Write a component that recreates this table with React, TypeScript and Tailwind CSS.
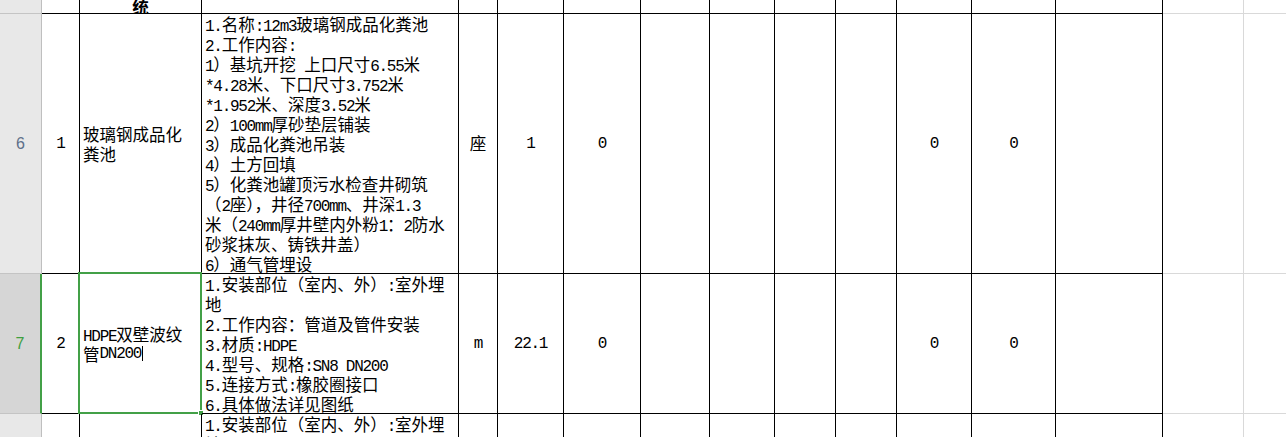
import type { ReactNode } from "react";

const colW = [
  "w-[38px]",
  "w-[122px]",
  "w-[257px]",
  "w-[39px]",
  "w-[66px]",
  "w-[77px]",
  "w-[69px]",
  "w-[65px]",
  "w-[61px]",
  "w-[61px]",
  "w-[75px]",
  "w-[84px]",
  "w-[107px]",
  "w-[81px]",
];

const row6Desc = [
  "1.名称:12m3玻璃钢成品化粪池",
  "2.工作内容:",
  "1）基坑开挖 上口尺寸6.55米",
  "*4.28米、下口尺寸3.752米",
  "*1.952米、深度3.52米",
  "2）100mm厚砂垫层铺装",
  "3）成品化粪池吊装",
  "4）土方回填",
  "5）化粪池罐顶污水检查井砌筑",
  "（2座），井径700mm、井深1.3",
  "米（240mm厚井壁内外粉1：2防水",
  "砂浆抹灰、铸铁井盖）",
  "6）通气管埋设",
];

const row7Desc = [
  "1.安装部位（室内、外）:室外埋",
  "地",
  "2.工作内容：管道及管件安装",
  "3.材质:HDPE",
  "4.型号、规格:SN8 DN200",
  "5.连接方式:橡胶圈接口",
  "6.具体做法详见图纸",
];

// ascii runs get a half-width mono face, like the sheet's song-style font
function T({ s }: { s: string }) {
  const parts = s.match(/[\x20-\x7e]+|[^\x20-\x7e]+/g) || [];
  return (
    <>
      {parts.map((p, i) =>
        /^[\x20-\x7e]+$/.test(p) ? (
          <span
            key={i}
            className="font-['Liberation_Mono',monospace] text-[16px] tracking-[-1.27px] whitespace-pre"
          >
            {p}
          </span>
        ) : (
          <span key={i}>{p}</span>
        ),
      )}
    </>
  );
}

type RowData = {
  num: string;
  selected?: boolean;
  height: string;
  cells: Record<number, ReactNode>;
};

function Lines({ lines }: { lines: string[] }) {
  return (
    <div className="flex flex-col">
      {lines.map((l, i) => (
        <div key={i} className="h-[20px] leading-[20px] whitespace-nowrap">
          <T s={l} />
        </div>
      ))}
    </div>
  );
}

function Cell({ i, children, className = "" }: { i: number; children?: ReactNode; className?: string }) {
  const border =
    i < 13
      ? "border-r border-b border-black"
      : i === 13
        ? "border-r border-b border-[#d9d9d9]"
        : "border-b border-[#d9d9d9]";
  const width = i < 14 ? colW[i] : "flex-1";
  return <div className={`relative shrink-0 ${width} ${border} ${className}`}>{children}</div>;
}

function cellAlign(i: number) {
  if (i === 2) return "pl-[3px] overflow-hidden";
  if (i === 1) return "pl-[3px] flex items-center";
  return "flex items-center justify-center";
}

function Row({ row }: { row: RowData }) {
  const hdr = row.selected
    ? "bg-[#d6d6d6] text-[#3f9f3f] border-r-2 border-r-[#43a047]"
    : "bg-[#e8e8e8] text-[#5e708a] border-r border-r-[#bfbfbf]";
  return (
    <div className={`flex ${row.height}`}>
      <div
        className={`w-[42px] shrink-0 flex items-center justify-center border-b border-b-[#c4c4c4] font-['Liberation_Sans',sans-serif] text-[16px] ${hdr}`}
      >
        {row.num}
      </div>
      {Array.from({ length: 15 }, (_, i) => {
        const v = row.cells[i];
        return (
          <Cell key={i} i={i} className={cellAlign(i)}>
            {typeof v === "string" ? <T s={v} /> : v}
            {row.selected && i === 1 && (
              <div className="absolute -top-[2px] -left-[2px] -right-[1px] -bottom-[1px] border-2 border-[#43a047] pointer-events-none">
                <div className="absolute -right-[4px] -bottom-[4px] w-[6px] h-[6px] bg-[#43a047] border border-white" />
              </div>
            )}
          </Cell>
        );
      })}
    </div>
  );
}

export default function App() {
  const rows: RowData[] = [
    {
      num: "6",
      height: "h-[260px]",
      cells: {
        0: "1",
        1: <Lines lines={["玻璃钢成品化", "粪池"]} />,
        2: <Lines lines={row6Desc} />,
        3: "座",
        4: "1",
        5: "0",
        10: "0",
        11: "0",
      },
    },
    {
      num: "7",
      selected: true,
      height: "h-[140px]",
      cells: {
        0: "2",
        1: (
          <div className="flex flex-col">
            <div className="h-[20px] leading-[20px] whitespace-nowrap">
              <T s="HDPE双壁波纹" />
            </div>
            <div className="h-[20px] leading-[20px] whitespace-nowrap flex items-center">
              <T s="管DN200" />
              <span className="inline-block w-px h-[15px] bg-black ml-[1px]" />
            </div>
          </div>
        ),
        2: <Lines lines={row7Desc} />,
        3: "m",
        4: "22.1",
        5: "0",
        10: "0",
        11: "0",
      },
    },
    {
      num: "",
      height: "h-[140px]",
      cells: {
        2: <Lines lines={row7Desc} />,
      },
    },
  ];

  return (
    <div className="h-[437px] w-[1286px] overflow-hidden bg-white text-black font-['Noto_Sans_CJK_SC',sans-serif] text-[16.5px]">
      <div className="flex h-[14px]">
        <div className="w-[42px] shrink-0 bg-[#e8e8e8] border-r border-r-[#bfbfbf] border-b border-b-[#c4c4c4]" />
        {Array.from({ length: 15 }, (_, i) => (
          <Cell key={i} i={i} className="overflow-hidden flex items-end justify-center">
            {i === 1 && <span className="font-bold leading-[16px] -mb-[2px]">统</span>}
          </Cell>
        ))}
      </div>
      {rows.map((r, i) => (
        <Row key={i} row={r} />
      ))}
    </div>
  );
}
